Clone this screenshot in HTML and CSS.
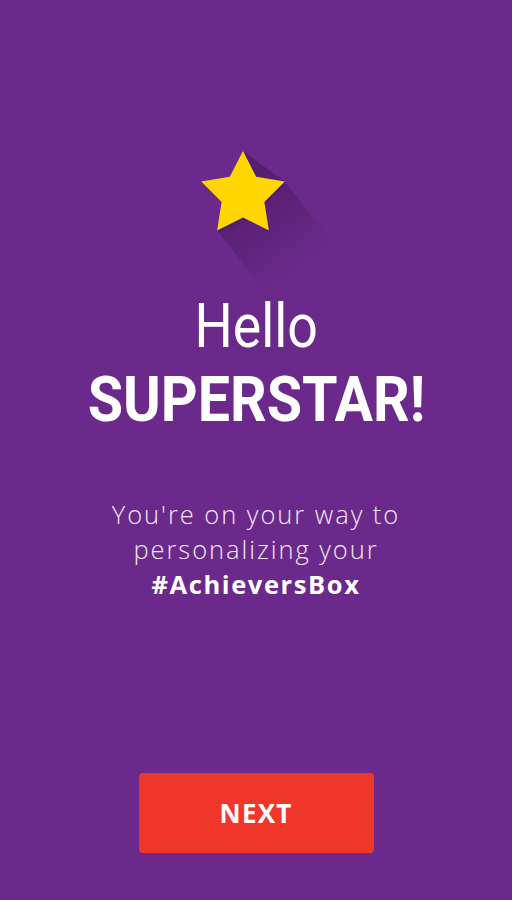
FILE: index.html
```html
<!DOCTYPE html>
<html>
<head>
<meta charset="utf-8">
<link rel="stylesheet" href="styles.css">
</head>
<body>
<main class="screen">
  <div class="star-wrap">
    <svg class="star" viewBox="190 140 132 170" width="132" height="170" aria-hidden="true">
      <defs>
        <linearGradient id="sh" gradientUnits="userSpaceOnUse" x1="243" y1="195" x2="300" y2="272">
          <stop offset="0" stop-color="#3f1457" stop-opacity="0.5"/>
          <stop offset="0.55" stop-color="#3f1457" stop-opacity="0.25"/>
          <stop offset="1" stop-color="#3f1457" stop-opacity="0"/>
        </linearGradient>
      </defs>
      <polygon fill="url(#sh)" points="284.8,181.4 340.6,252.5 272.9,301.7 217.1,230.6 243,151"/>
      <polygon fill="#4a1a63" opacity="0.5" transform="translate(1.5 2)" points="243,151 256.2,176.8 284.8,181.4 264.4,202 268.9,230.6 243,217.5 217.1,230.6 221.6,202 201.2,181.4 229.8,176.8"/>
      <polygon fill="#ffd600" points="243,151 256.2,176.8 284.8,181.4 264.4,202 268.9,230.6 243,217.5 217.1,230.6 221.6,202 201.2,181.4 229.8,176.8"/>
    </svg>
  </div>
  <h1 class="title">
    <span class="hello">Hello</span>
    <span class="superstar">SUPERSTAR!</span>
  </h1>
  <p class="lead">You're on your way to<br>personalizing your<br><strong>#AchieversBox</strong></p>
  <button class="next" type="button">NEXT</button>
</main>
</body>
</html>
```

FILE: styles.css
```css
html, body {
  margin: 0;
  padding: 0;
}
body {
  background: #6b2a8b;
  width: 512px;
  height: 900px;
  overflow: hidden;
}
.screen {
  display: flex;
  flex-direction: column;
  align-items: center;
  height: 900px;
  color: #ffffff;
}
.star-wrap {
  margin-top: 140px;
  height: 170px;
}
.star {
  display: block;
  overflow: visible;
}
.title {
  margin: -21px 0 0 0;
  display: flex;
  flex-direction: column;
  align-items: center;
  font-family: "Roboto", "Liberation Sans", sans-serif;
  font-weight: normal;
}
.hello {
  display: inline-block;
  font-size: 61px;
  line-height: 74px;
  font-weight: 400;
  transform: scaleX(0.88);
}
.superstar {
  display: inline-block;
  font-size: 63px;
  line-height: 74px;
  font-weight: 700;
  transform: scaleX(0.91);
}
.lead {
  margin: 60px 0 0 0;
  font-family: "Open Sans", "Lato", sans-serif;
  font-weight: 300;
  font-size: 25.5px;
  line-height: 35px;
  letter-spacing: 1.95px;
  text-align: center;
  color: #f1e8f5;
}
.lead strong {
  font-weight: 700;
  color: #ffffff;
  letter-spacing: 1.6px;
}
.next {
  margin-top: auto;
  margin-bottom: 47px;
  width: 235px;
  height: 80px;
  border: 0;
  border-radius: 4px;
  background: #f0352a;
  color: #ffffff;
  font-family: "Open Sans", "Liberation Sans", sans-serif;
  font-weight: 700;
  font-size: 26px;
  letter-spacing: 1.2px;
  padding: 0;
}
```
